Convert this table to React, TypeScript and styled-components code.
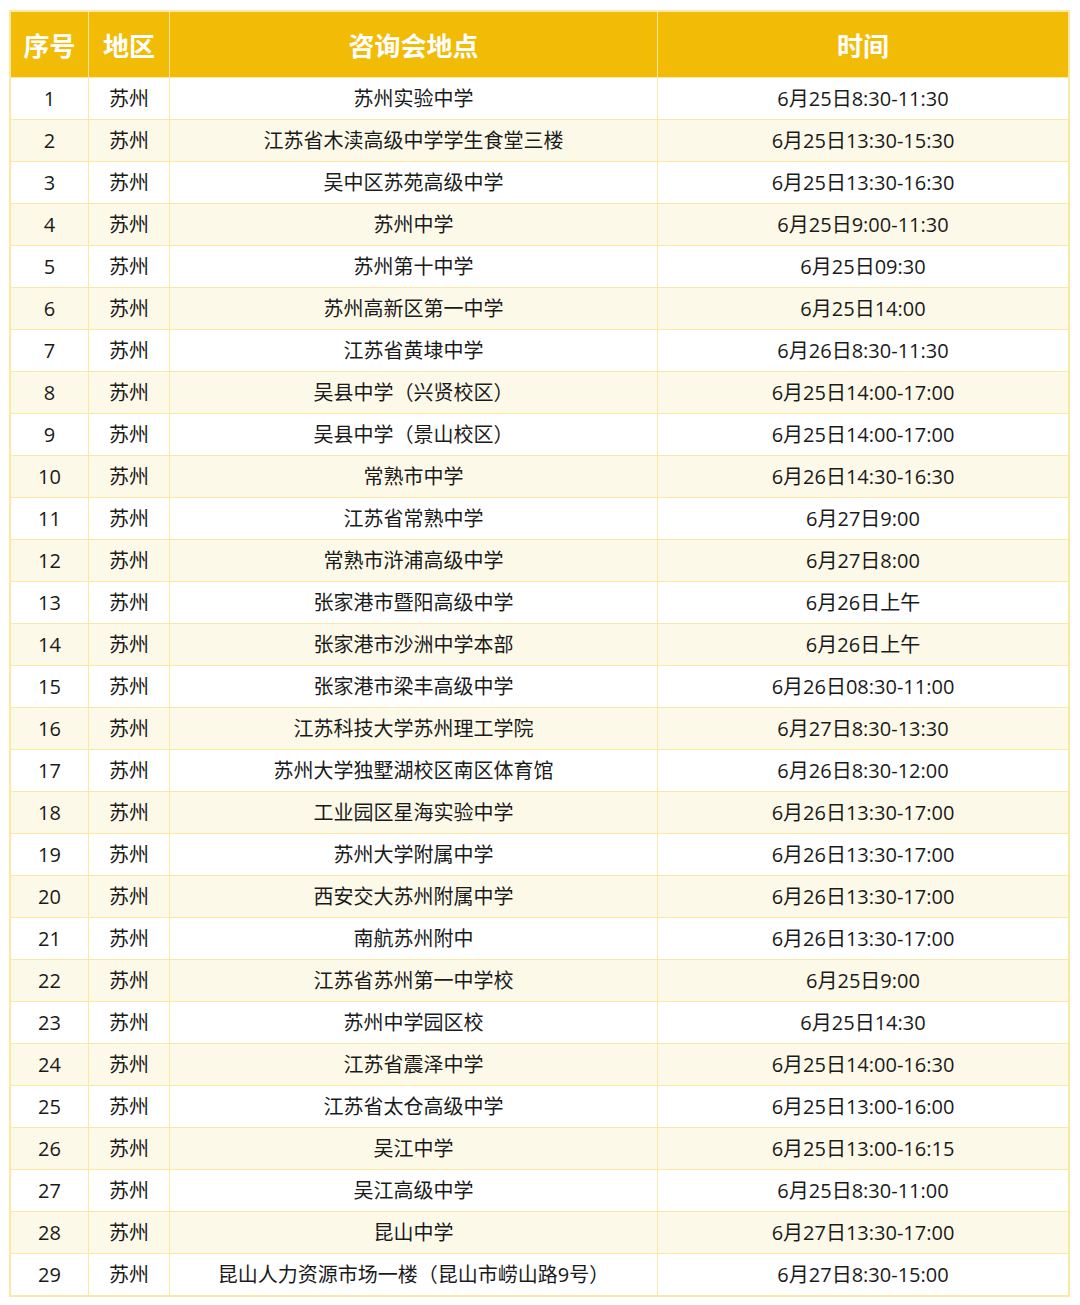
import styled, { createGlobalStyle } from 'styled-components';

const GlobalStyle = createGlobalStyle`
  body {
    margin: 0;
    background: #ffffff;
    font-family: "Open Sans", "Noto Sans CJK SC", sans-serif;
  }
`;

const Page = styled.div`
  padding: 10px 10px 0 9px;
`;

const Table = styled.table`
  width: 1061px;
  border-collapse: collapse;
  table-layout: fixed;
  border: 2px solid #fde7a4;
`;

const HeadCell = styled.th<{ $w: number }>`
  width: ${(p) => p.$w}px;
  height: 65px;
  padding: 0;
  background: #f2bb05;
  color: #ffffff;
  font-family: "Noto Sans CJK SC", sans-serif;
  font-size: 26px;
  line-height: 30px;
  font-weight: 700;
  text-align: center;
  border: 1px solid #fde7a4;
`;

const Row = styled.tr<{ $alt: boolean }>`
  background: ${(p) => (p.$alt ? '#fdf9e9' : '#ffffff')};
`;

const Cell = styled.td`
  height: 41px;
  padding: 0;
  font-size: 20px;
  line-height: 24px;
  color: #1a1a1a;
  text-align: center;
  border: 1px solid #fde7a4;
  white-space: nowrap;
`;

const rows: [string, string][] = [
  ['苏州实验中学', '6月25日8:30-11:30'],
  ['江苏省木渎高级中学学生食堂三楼', '6月25日13:30-15:30'],
  ['吴中区苏苑高级中学', '6月25日13:30-16:30'],
  ['苏州中学', '6月25日9:00-11:30'],
  ['苏州第十中学', '6月25日09:30'],
  ['苏州高新区第一中学', '6月25日14:00'],
  ['江苏省黄埭中学', '6月26日8:30-11:30'],
  ['吴县中学（兴贤校区）', '6月25日14:00-17:00'],
  ['吴县中学（景山校区）', '6月25日14:00-17:00'],
  ['常熟市中学', '6月26日14:30-16:30'],
  ['江苏省常熟中学', '6月27日9:00'],
  ['常熟市浒浦高级中学', '6月27日8:00'],
  ['张家港市暨阳高级中学', '6月26日上午'],
  ['张家港市沙洲中学本部', '6月26日上午'],
  ['张家港市梁丰高级中学', '6月26日08:30-11:00'],
  ['江苏科技大学苏州理工学院', '6月27日8:30-13:30'],
  ['苏州大学独墅湖校区南区体育馆', '6月26日8:30-12:00'],
  ['工业园区星海实验中学', '6月26日13:30-17:00'],
  ['苏州大学附属中学', '6月26日13:30-17:00'],
  ['西安交大苏州附属中学', '6月26日13:30-17:00'],
  ['南航苏州附中', '6月26日13:30-17:00'],
  ['江苏省苏州第一中学校', '6月25日9:00'],
  ['苏州中学园区校', '6月25日14:30'],
  ['江苏省震泽中学', '6月25日14:00-16:30'],
  ['江苏省太仓高级中学', '6月25日13:00-16:00'],
  ['吴江中学', '6月25日13:00-16:15'],
  ['吴江高级中学', '6月25日8:30-11:00'],
  ['昆山中学', '6月27日13:30-17:00'],
  ['昆山人力资源市场一楼（昆山市崂山路9号）', '6月27日8:30-15:00'],
];

export default function App() {
  return (
    <>
      <GlobalStyle />
      <Page>
        <Table>
          <thead>
            <tr>
              <HeadCell $w={77}>序号</HeadCell>
              <HeadCell $w={80}>地区</HeadCell>
              <HeadCell $w={487}>咨询会地点</HeadCell>
              <HeadCell $w={410}>时间</HeadCell>
            </tr>
          </thead>
          <tbody>
            {rows.map(([place, time], i) => (
              <Row key={i} $alt={i % 2 === 1}>
                <Cell>{i + 1}</Cell>
                <Cell>苏州</Cell>
                <Cell>{place}</Cell>
                <Cell>{time}</Cell>
              </Row>
            ))}
          </tbody>
        </Table>
      </Page>
    </>
  );
}
